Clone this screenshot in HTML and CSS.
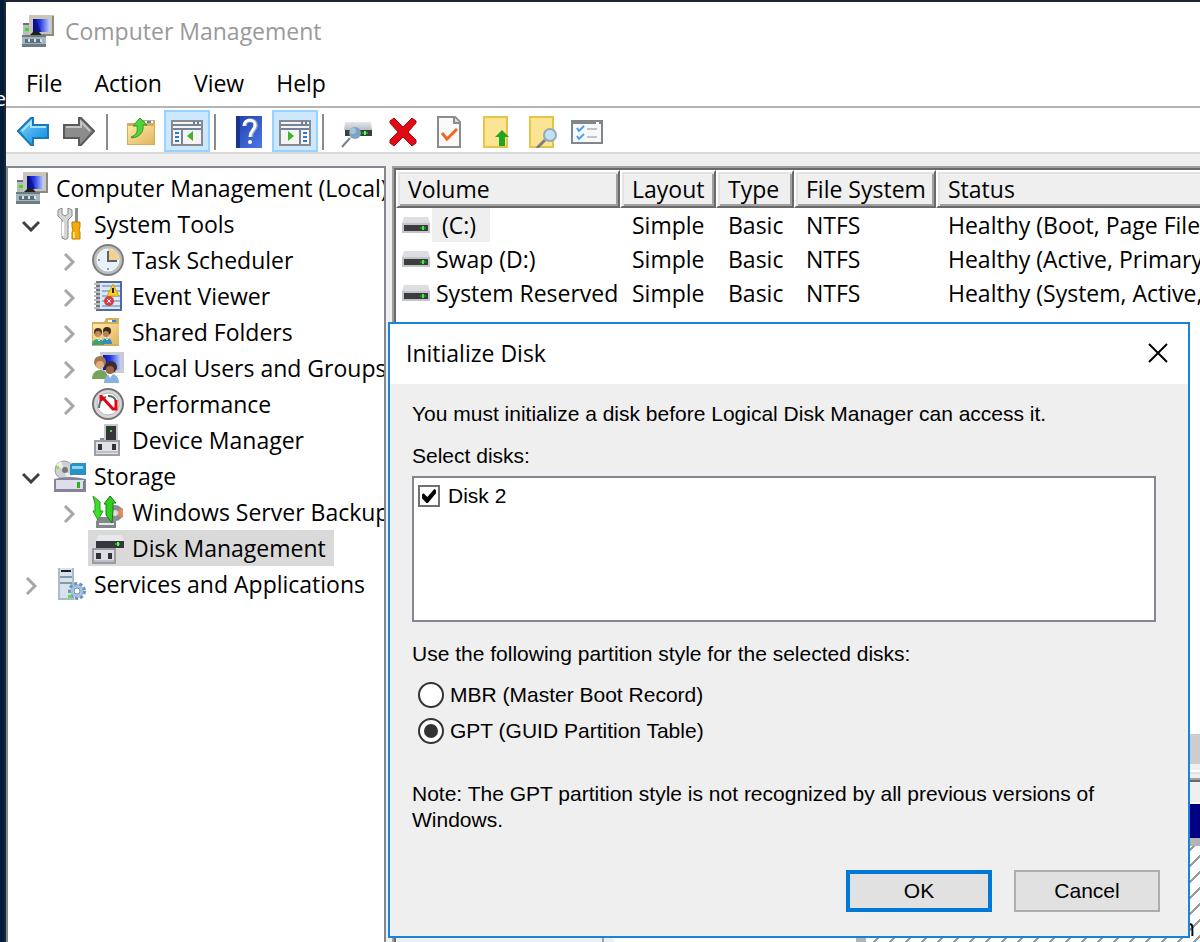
FILE: index.html
```html
<!DOCTYPE html>
<html lang="en">
<head>
    <meta charset="UTF-8">
    <meta name="viewport" content="width=device-width, initial-scale=1.0">
    <title>Computer Management</title>
    <link rel="stylesheet" href="styles.css">
</head>
<body>
    <!-- shared icons -->
    <svg class="defs" aria-hidden="true">
        <defs>
            <linearGradient id="screen" x1="0" x2="1"><stop offset="0" stop-color="#0a12b8"/><stop offset=".4" stop-color="#2236e0"/><stop offset="1" stop-color="#c4d4ff"/></linearGradient>
            <linearGradient id="folder" x1="0" y1="0" x2="1" y2="1"><stop offset="0" stop-color="#ffe9a6"/><stop offset="1" stop-color="#e0b560"/></linearGradient>
            <linearGradient id="blue" x1="0" y1="0" x2="1" y2="1"><stop offset="0" stop-color="#7fd4fb"/><stop offset="1" stop-color="#0a86e0"/></linearGradient>
            <linearGradient id="steel" x1="0" y1="0" x2="0" y2="1"><stop offset="0" stop-color="#e4e6ea"/><stop offset="1" stop-color="#b9bdc4"/></linearGradient>
            <linearGradient id="help" x1="0" y1="0" x2="1" y2="1"><stop offset="0" stop-color="#1f3fa8"/><stop offset="1" stop-color="#4a78e8"/></linearGradient>
            <symbol id="i-computer" viewBox="0 0 32 32">
                <path fill="#b9bcbd" d="M1 8h7v12H1z"/><path fill="#6a7377" d="M1 8h7v2H1z"/><path fill="#36e01c" d="M3 13h4v3H3z"/>
                <path fill="#c9c5b8" d="M7 0h25v21H7z"/><path fill="#8d8a82" d="M30 1h2v20H20v-2h10z"/>
                <path fill="url(#screen)" d="M11 4h17v13H11z"/><path fill="#060a66" d="M11 4h3l5 13h-8z" opacity=".6"/>
                <path fill="#222" d="M12 16h4l4 4H8z"/>
                <path fill="#a5b5bd" d="M0 20h24v11H0z"/><path fill="#6b7c85" d="M0 20h24v2H0zM0 29h24v3H0z"/>
                <path fill="#5d6e77" d="M3 24h16v4H3z"/><path fill="#d5e3ea" d="M6 24h2v3H6zM12 24h2v3h-2zM18 24h2v3h-2z"/>
            </symbol>
            <symbol id="i-drive" viewBox="0 0 28 16">
                <path fill="#dcdee2" d="M2 0h24l2 6H0z"/><path fill="#c1c5cb" d="M0 6h28v10H0z"/>
                <path fill="#3c3c3e" d="M2 8h24v6H2z"/><path fill="#1f8a1f" d="M18 10h6v2h-6z"/><path fill="#3fee3f" d="M20 9h2v4h-2z"/>
            </symbol>
            <symbol id="i-open" viewBox="0 0 18 12"><path d="M1 2l8 8 8-8" fill="none" stroke="#404040" stroke-width="3"/></symbol>
            <symbol id="i-closed" viewBox="0 0 12 18"><path d="M2 1l8 8-8 8" fill="none" stroke="#a6a6a6" stroke-width="3"/></symbol>
        </defs>
    </svg>

    <div class="desktop-label">e</div>
    <div class="window">
        <header class="title-bar">
            <svg class="icon"><use href="#i-computer"/></svg>
            <h1>Computer Management</h1>
        </header>
        <nav class="menu-bar">
            <button>File</button>
            <button>Action</button>
            <button>View</button>
            <button>Help</button>
        </nav>
        <div class="toolbar">
            <button aria-label="Back"><svg class="icon" viewBox="0 0 32 32"><path d="M1 15L14 2h2v7h15v13H16v7h-2z" fill="url(#blue)" stroke="#1978b8" stroke-width="2"/><path d="M5 15l9-9v5h15" fill="none" stroke="#a6e4ff" stroke-width="2"/></svg></button>
            <button aria-label="Forward"><svg class="icon" viewBox="0 0 32 32"><path d="M31 15L18 2h-2v7H1v13h15v7h2z" fill="#8c8c8c" stroke="#5a5a5a" stroke-width="2"/><path d="M3 11h15V6l9 9" fill="none" stroke="#c4c4c4" stroke-width="2"/></svg></button>
            <span class="sep"></span>
            <button aria-label="Up one level"><svg class="icon" viewBox="0 0 32 32"><path d="M2 7h14l2-3h12v25H2z" fill="#d9ad55"/><path d="M3 10h26v18H3z" fill="url(#folder)"/><path d="M20 5h8v2h-8z" fill="#fff"/><path d="M22 5h4v2h-4z" fill="#2a8cf0"/><path d="M6 21c6-2 7-6 6-11H8l7-8 7 7h-4c1 8-4 12-11 13z" fill="#4fd43a" stroke="#2c9a22"/></svg></button>
            <button class="on" aria-label="Show/Hide Console Tree"><svg class="icon" viewBox="0 0 32 32"><path d="M1 5h30v24H1z" fill="#f4f4f4" stroke="#8a8a8e" stroke-width="2"/><path d="M2 8h28v2H2zM2 12h28v2H2zM10 14h2v14h-2z" fill="#75839a"/><path d="M22 5h2v3h-2zM26 5h2v3h-2z" fill="#6a7ca0"/><path d="M4 16h4v2H4zM4 20h4v2H4zM4 24h4v2H4z" fill="#2f79c4"/><path d="M22 15v10l-6-5z" fill="#44b02c"/></svg></button>
            <span class="sep"></span>
            <button aria-label="Help"><svg class="icon" viewBox="0 0 32 32"><path d="M3 0h26v32H3z" fill="url(#help)"/><path d="M3 0h4v32H3z" fill="#1a3590"/><path d="M12 10c0-8 11-7 11-1 0 5-5 5-5 12" fill="none" stroke="#9aa4c8" stroke-width="4"/><path d="M11 10c0-8 11-7 11-1 0 5-5 5-5 12" fill="none" stroke="#fff" stroke-width="3"/><circle cx="17" cy="26" r="2" fill="#fff"/></svg></button>
            <button class="on" aria-label="Show/Hide Action Pane"><svg class="icon" viewBox="0 0 32 32"><path d="M1 5h30v24H1z" fill="#f4f4f4" stroke="#8a8a8e" stroke-width="2"/><path d="M2 8h28v2H2zM2 12h28v2H2zM20 14h2v14h-2z" fill="#75839a"/><path d="M22 5h2v3h-2zM26 5h2v3h-2z" fill="#6a7ca0"/><path d="M24 16h4v2h-4zM24 20h4v2h-4zM24 24h4v2h-4z" fill="#2f79c4"/><path d="M9 15v10l6-5z" fill="#44b02c"/></svg></button>
            <span class="sep"></span>
            <button aria-label="Rescan Disks"><svg class="icon" viewBox="0 0 32 32"><path d="M4 6h26l1 8H3z" fill="url(#steel)"/><path d="M4 14h27v6H4z" fill="#3c3f40"/><path d="M21 16h6v2h-6z" fill="#1fa01f"/><path d="M23 15h2v4h-2z" fill="#5cff5c"/><path d="M9 22l-8 9" stroke="#77828a" stroke-width="2"/><circle cx="14" cy="17" r="6" fill="#7ba3c0"/><circle cx="12" cy="15" r="3" fill="#a5c5da"/></svg></button>
            <button aria-label="Delete"><svg class="icon" viewBox="0 0 32 32"><path d="M3 5l4-3 9 9 9-9 4 3v2l-8 9 8 8v3l-4 3-9-9-9 9-4-3v-3l8-8-8-9z" fill="#df0a16" stroke="#a80c12" stroke-width="1"/></svg></button>
            <button aria-label="Properties"><svg class="icon" viewBox="0 0 32 32"><path d="M5 1h17l5 5v25H5z" fill="#f9f9fa" stroke="#8b8b8f" stroke-width="2"/><path d="M21 1v6h6" fill="#ddd" stroke="#8b8b8f" stroke-width="2"/><path d="M9 17l5 6 10-10" fill="none" stroke="#f2652a" stroke-width="3"/></svg></button>
            <button aria-label="Move Up"><svg class="icon" viewBox="0 0 32 32"><path d="M5 1h23v30H5z" fill="#fbe494" stroke="#e8c344" stroke-width="2"/><path d="M23 14l7 7h-4v9h-6v-9h-4z" fill="#22a51e"/></svg></button>
            <button aria-label="Find"><svg class="icon" viewBox="0 0 32 32"><path d="M5 1h23v30H5z" fill="#fbe494" stroke="#e8c344" stroke-width="2"/><path d="M20 24l-8 8" stroke="#7a7f82" stroke-width="3"/><circle cx="25" cy="19" r="6" fill="#c3e3f5" stroke="#94a9b5" stroke-width="2"/></svg></button>
            <button aria-label="View Options"><svg class="icon" viewBox="0 0 32 32"><path d="M1 5h30v22H1z" fill="#f6f8fa" stroke="#7f868c" stroke-width="2"/><path d="M1 4h30v4H1z" fill="#7f868c"/><path d="M25 6h3v2h-3z" fill="#fff"/><path d="M6 12l2 3 5-5M6 20l2 3 5-5" fill="none" stroke="#4aa0ea" stroke-width="2"/><path d="M16 12h10v2H16zM16 20h10v2H16z" fill="#c4c4c4"/></svg></button>
        </div>

        <div class="panes">
            <nav class="tree">
                <div class="row"><a class="node" href="#"><svg class="icon"><use href="#i-computer"/></svg>Computer Management (Local)</a></div>
                <div class="row">
                    <span class="twisty"><svg class="open"><use href="#i-open"/></svg></span>
                    <a class="node" href="#"><svg class="icon" viewBox="0 0 32 32"><path d="M4 2v6l4 4v18q4 3 6 0V12l4-4V2l-4-2v6l-3 2-3-2V0z" fill="#d4d6d8" stroke="#848688"/><path d="M9 14v14" stroke="#fff" stroke-width="2"/><path d="M21 0h3v14h-3z" fill="#8d9092"/><path d="M18 14h8v5l-1 3 1 2v7h-8v-7l1-2-1-3z" fill="#f2ab0c" stroke="#c07c00"/><path d="M20 24v6" stroke="#ffe070" stroke-width="2"/></svg>System Tools</a>
                </div>
                <div class="row sub">
                    <span class="twisty"><svg class="closed"><use href="#i-closed"/></svg></span>
                    <a class="node" href="#"><svg class="icon" viewBox="0 0 32 32"><circle cx="16" cy="16" r="15" fill="#bcbec0" stroke="#7d7f80" stroke-width="2"/><circle cx="16" cy="16" r="11" fill="#e8f1f9" stroke="#fff"/><path d="M16 5a11 11 0 0 1 11 11H16z" fill="#f4cf8c"/><path d="M16 7v10h9" fill="none" stroke="#566370" stroke-width="2"/><path d="M15 25h2M6 16h2" stroke="#8898a8" stroke-width="2"/></svg>Task Scheduler</a>
                </div>
                <div class="row sub">
                    <span class="twisty"><svg class="closed"><use href="#i-closed"/></svg></span>
                    <a class="node" href="#"><svg class="icon" viewBox="0 0 32 32"><path d="M5 2h24v28H5z" fill="#dce8f6" stroke="#4f68a6" stroke-width="2"/><path d="M10 6h18M10 11h18M10 16h18M10 21h18M10 26h18" stroke="#91b4dc" stroke-width="2"/><path d="M4 1h4v29H4z" fill="#6f7784"/><path d="M2 4h6M2 8h6M2 12h6M2 16h6M2 20h6M2 24h6M2 28h6" stroke="#bbb" stroke-width="2"/><path d="M21 4l6 12H15z" fill="#f6cf2c" stroke="#d4a510"/><path d="M20 8h2v5h-2z" fill="#222"/><circle cx="17" cy="21" r="5" fill="#d83a42"/><path d="M15 19l4 4m0-4l-4 4" stroke="#fff"/></svg>Event Viewer</a>
                </div>
                <div class="row sub">
                    <span class="twisty"><svg class="closed"><use href="#i-closed"/></svg></span>
                    <a class="node" href="#"><svg class="icon" viewBox="0 0 32 32"><path d="M0 6h12l2-4h13v28H0z" fill="#d6ac58"/><path d="M1 8h26v20H1z" fill="url(#folder)"/><path d="M16 4h8v2h-8z" fill="#fff"/><path d="M20 4h4v2h-4z" fill="#2d8ced"/><circle cx="6" cy="16" r="4" fill="#4a3524"/><circle cx="6" cy="18" r="3" fill="#c48a5c"/><path d="M0 29c0-8 12-8 12 0z" fill="#35a679"/><circle cx="15" cy="15" r="4" fill="#3a2a1e"/><circle cx="14" cy="18" r="3" fill="#b98156"/><path d="M10 28c0-8 10-8 10 0z" fill="#2d8fc9"/><path d="M5 22l2 3 2-3M13 21l2 3 2-3" stroke="#fff" fill="none"/></svg>Shared Folders</a>
                </div>
                <div class="row sub">
                    <span class="twisty"><svg class="closed"><use href="#i-closed"/></svg></span>
                    <a class="node" href="#"><svg class="icon" viewBox="0 0 32 32"><path d="M8 0h24v21H8z" fill="#c9cbd0"/><path d="M11 3h18v15H11z" fill="url(#screen)"/><circle cx="8" cy="10" r="6" fill="#a47a4a"/><circle cx="8" cy="13" r="4" fill="#e0b084"/><path d="M0 27c0-12 16-12 16 0z" fill="#75a45a"/><circle cx="19" cy="15" r="6" fill="#3c2d28"/><circle cx="18" cy="18" r="4" fill="#9a6344"/><path d="M12 31c0-12 15-12 15 0z" fill="#86b3e0"/><path d="M16 22l2 4 3-4z" fill="#fff"/></svg>Local Users and Groups</a>
                </div>
                <div class="row sub">
                    <span class="twisty"><svg class="closed"><use href="#i-closed"/></svg></span>
                    <a class="node" href="#"><svg class="icon" viewBox="0 0 32 32"><circle cx="16" cy="16" r="15" fill="#d8d8d8" stroke="#747474" stroke-width="2"/><circle cx="16" cy="16" r="11" fill="#fff" stroke="#b5b5b5"/><path d="M7 20c0-6 3-10 7-11M16 8c4 0 7 2 8 5" fill="none" stroke="#536f60" stroke-width="2"/><path d="M9 8l12 13h3v-9M9 7v6" fill="none" stroke="#de0814" stroke-width="3"/></svg>Performance</a>
                </div>
                <div class="row sub">
                    <span class="twisty"></span>
                    <a class="node" href="#"><svg class="icon" viewBox="0 0 32 32"><path d="M12 0h14v18H12z" fill="#c8cbce"/><path d="M14 2h10v14H14z" fill="#343638"/><path d="M18 6h2v2h-2z" fill="#41e441"/><path d="M8 14h4v3H8z" fill="#8b8e90"/><path d="M3 17h24v14H3z" fill="#dfe1e7" stroke="#9b9ea6" stroke-width="2"/><path d="M6 20h4v6H6zM20 20h4v6h-4z" fill="#333"/><path d="M4 27h22v2H4z" fill="#bcbfc8"/></svg>Device Manager</a>
                </div>
                <div class="row">
                    <span class="twisty"><svg class="open"><use href="#i-open"/></svg></span>
                    <a class="node" href="#"><svg class="icon" viewBox="0 0 32 32"><circle cx="10" cy="10" r="9" fill="#cfd1d2" stroke="#999"/><path d="M10 10L2 5l5-4zM10 10l8 6-5 3z" fill="#eef0f0"/><circle cx="11" cy="10" r="3" fill="#777"/><path d="M2 6h3v3H2z" fill="#98dc4a"/><path d="M16 5l2-2h14v12H16z" fill="#2892c4"/><path d="M18 6h11v3H18z" fill="#8ad6f2"/><path d="M0 19q16-4 32 0v13H0z" fill="#85839c"/><path d="M2 20h28v9H2z" fill="#dcdcea"/><path d="M23 22h3v6h-3z" fill="#2eb021"/><path d="M29 21h1v8h-1z" fill="#777"/></svg>Storage</a>
                </div>
                <div class="row sub">
                    <span class="twisty"><svg class="closed"><use href="#i-closed"/></svg></span>
                    <a class="node" href="#"><svg class="icon" viewBox="0 0 32 32"><path d="M4 25l4-4h12l4 4v7H4z" fill="#84878a"/><path d="M7 27h15v2H7z" fill="#e4e6e8"/><circle cx="23" cy="17" r="8" fill="#8b8d92"/><path d="M23 17l8-5v10z" fill="#e68a5c"/><circle cx="23" cy="17" r="3" fill="#ddd"/><path d="M1 0l7 6v9h3l-5 9-5-9h2V8z" fill="#3fe02c" stroke="#239a18"/><path d="M12 8l6-8 6 7h-3v7l-1 13-6-8V8z" fill="#2fcf22" stroke="#157c12"/></svg>Windows Server Backup</a>
                </div>
                <div class="row sub">
                    <span class="twisty"></span>
                    <a class="node selected" href="#"><svg class="icon" viewBox="0 0 32 32"><path d="M6 3h24l2 6H4z" fill="#e6e8ec"/><path d="M4 9h28v7H4z" fill="#353738"/><path d="M23 11h5v2h-5z" fill="#1fa61f"/><path d="M25 10h2v4h-2z" fill="#52ff52"/><path d="M1 17h22v14H1z" fill="#dcdee4" stroke="#999ca2" stroke-width="2"/><path d="M4 21h5v6H4zM16 21h4v6h-4z" fill="#333"/><path d="M2 28h20v2H2z" fill="#bcbfc6"/></svg>Disk Management</a>
                </div>
                <div class="row">
                    <span class="twisty"><svg class="closed"><use href="#i-closed"/></svg></span>
                    <a class="node" href="#"><svg class="icon" viewBox="0 0 32 32"><path d="M4 0h16v32H4z" fill="#a9bccb"/><path d="M6 0h12v30H6z" fill="#d7e2ea"/><path d="M7 2h10v2H7z" fill="#222"/><path d="M6 8h12v2H6zM6 14h12v2H6z" fill="#8299aa"/><circle cx="23" cy="23" r="7" fill="#a9c3de" stroke="#6d94bd" stroke-width="4" stroke-dasharray="3 2"/><circle cx="23" cy="23" r="6" fill="#a9c3de"/><circle cx="23" cy="23" r="3" fill="#fff" stroke="#6d94bd"/><path d="M14 27h4v3h-4z" fill="#62e04a"/></svg>Services and Applications</a>
                </div>
            </nav>

            <main class="details">
                <div class="volumes">
                    <table>
                        <colgroup><col class="c-volume"><col class="c-layout"><col class="c-type"><col class="c-fs"><col></colgroup>
                        <thead>
                            <tr><th>Volume</th><th>Layout</th><th>Type</th><th>File System</th><th>Status</th></tr>
                        </thead>
                        <tbody>
                            <tr><td class="name"><svg class="drive"><use href="#i-drive"/></svg><span class="focus">(C:)</span></td><td>Simple</td><td>Basic</td><td>NTFS</td><td>Healthy (Boot, Page File,</td></tr>
                            <tr><td class="name"><svg class="drive"><use href="#i-drive"/></svg><span>Swap (D:)</span></td><td>Simple</td><td>Basic</td><td>NTFS</td><td>Healthy (Active, Primary</td></tr>
                            <tr><td class="name"><svg class="drive"><use href="#i-drive"/></svg><span>System Reserved</span></td><td>Simple</td><td>Basic</td><td>NTFS</td><td>Healthy (System, Active,</td></tr>
                        </tbody>
                    </table>
                </div>
                <div class="scrollbar"></div>
                <div class="splitter"></div>
                <div class="graph">
                    <div class="disk"></div>
                    <div class="partition plain"></div>
                    <div class="partition hatched"><span>n</span></div>
                </div>
            </main>
        </div>
    </div>

    <form class="dialog" role="dialog" aria-labelledby="dialog-title">
        <div class="dialog-title">
            <h2 id="dialog-title">Initialize Disk</h2>
            <button type="button" class="close" aria-label="Close"><svg viewBox="0 0 20 20"><path d="M1 1l18 18M19 1L1 19" stroke="#000" stroke-width="2"/></svg></button>
        </div>
        <div class="dialog-body">
            <p>You must initialize a disk before Logical Disk Manager can access it.</p>
            <p class="list-label">Select disks:</p>
            <div class="disk-list">
                <label><input type="checkbox" checked>Disk 2</label>
            </div>
            <p class="style-label">Use the following partition style for the selected disks:</p>
            <div class="styles">
                <label><input type="radio" name="style">MBR (Master Boot Record)</label>
                <label><input type="radio" name="style" checked>GPT (GUID Partition Table)</label>
            </div>
            <p class="note">Note: The GPT partition style is not recognized by all previous versions of Windows.</p>
            <div class="actions">
                <button type="button" class="btn default">OK</button>
                <button type="button" class="btn">Cancel</button>
            </div>
        </div>
    </form>
</body>
</html>
```
FILE: styles.css
```css
*{
    margin: 0;
    padding: 0;
    box-sizing: border-box;
}
body{
    position: relative;
    height: 100vh;
    padding: 2px 0 0 6px;
    overflow: hidden;
    background: linear-gradient(90deg, #041c3c 4px, #1c2634 4px);
    color: #000;
    font-family: "Open Sans", "Noto Sans", sans-serif;
    font-size: 23px;
    line-height: 34px;
}
button{
    font: inherit;
    color: inherit;
    border: none;
    background: none;
}
.defs{
    position: absolute;
    width: 0;
    height: 0;
}
.icon{
    width: 32px;
    height: 32px;
    flex: none;
    display: block;
}
/* caption of a desktop icon, mostly hidden by the window */
.desktop-label{
    position: absolute;
    left: 0;
    top: 82px;
    width: 6px;
    overflow: hidden;
    direction: rtl;
    color: #fff;
    font-size: 20px;
}

/* window */
.window{
    display: flex;
    flex-direction: column;
    height: 100%;
    background: #fff;
}
.title-bar{
    display: flex;
    align-items: center;
    gap: 11px;
    height: 60px;
    padding: 0 0 2px 16px;
    color: #999;
}
.title-bar h1{
    font-size: inherit;
    font-weight: 400;
}
.menu-bar{
    display: flex;
    height: 44px;
    padding: 0 0 2px 4px;
}
.menu-bar button{
    padding: 0 16px;
}
.toolbar{
    display: flex;
    flex: none;
    height: 48px;
    padding: 2px 4px 0;
    border-top: 2px solid #b4b4b4;
    border-bottom: 2px solid #d9d9d9;
}
.toolbar button{
    display: flex;
    align-items: center;
    justify-content: center;
    width: 46px;
    height: 42px;
    padding: 2px 1px 0 0;
}
.toolbar .on{
    background: #cce8ff;
    border: 2px solid #99d1ff;
}
.sep{
    width: 16px;
    padding: 4px 0 2px 4px;
}
.sep::before{
    content: '';
    display: block;
    width: 2px;
    height: 100%;
    background: #8c8c8c;
}
.panes{
    display: flex;
    flex: 1;
    gap: 6px;
    min-height: 0;
    padding-top: 12px;
    background: #efefef;
}

/* console tree */
.tree{
    width: 380px;
    flex: none;
    padding: 2px 0 0 4px;
    overflow: hidden;
    background: #fff;
    border: 2px solid #828790;
    border-bottom: none;
}
.row{
    display: flex;
    height: 36px;
}
.row.sub{
    padding-left: 38px;
}
.twisty{
    display: flex;
    flex: none;
    align-items: center;
    justify-content: center;
    width: 38px;
    padding-top: 4px;
}
.open{
    width: 18px;
    height: 12px;
}
.closed{
    width: 12px;
    height: 18px;
}
.node{
    display: flex;
    align-items: center;
    gap: 8px;
    padding: 0 8px 0 4px;
    color: #000;
    text-decoration: none;
    white-space: nowrap;
}
.node.selected{
    background: #d9d9d9;
}

/* volume list */
.details{
    display: flex;
    flex-direction: column;
    flex: 1;
    min-width: 0;
    border-left: 2px solid #a0a0a0;
    border-top: 2px solid #a0a0a0;
}
.volumes{
    flex: 1;
    min-height: 0;
    overflow: hidden;
    background: #fff;
    border-left: 2px solid #696969;
    border-top: 2px solid #696969;
}
table{
    width: 100%;
    table-layout: fixed;
    border-collapse: separate;
    border-spacing: 0;
}
.c-volume{ width: 224px; }
.c-layout{ width: 96px; }
.c-type{ width: 78px; }
.c-fs{ width: 142px; }
th{
    height: 38px;
    padding-left: 10px;
    text-align: left;
    font-weight: 400;
    line-height: 32px;
    white-space: nowrap;
    background: #efefef;
    border: 2px solid #696969;
    border-left-color: #fff;
    border-top-color: #fff;
    box-shadow: inset 2px 2px #e3e3e3, inset -2px -2px #a0a0a0;
}
th:last-child{
    border-right: none;
    box-shadow: inset 2px 2px #e3e3e3, inset 0 -2px #a0a0a0;
}
td{
    height: 34px;
    padding-left: 12px;
    white-space: nowrap;
    overflow: hidden;
}
.name{
    display: flex;
    align-items: center;
    padding-left: 6px;
}
.drive{
    flex: none;
    width: 28px;
    height: 16px;
    margin-right: 2px;
}
.name span{
    padding-left: 4px;
}
.name .focus{
    padding: 0 14px 0 10px;
    background: #efefef;
}

/* graphical view */
.scrollbar{
    height: 30px;
    background: #cdcdcd;
}
.splitter{
    height: 16px;
    background: #efefef;
    border-bottom: 2px solid #a0a0a0;
    box-shadow: inset 0 -4px #efefef, inset 0 -6px #e3e3e3, inset 0 -8px #fff;
}
.graph{
    display: flex;
    height: 162px;
    border-left: 2px solid #696969;
    border-top: 2px solid #696969;
    background: #efefef;
}
.disk{
    width: 206px;
    margin: 20px 2px 0;
    border-right: 2px solid #a0a0a0;
}
.partition{
    margin-top: 20px;
    border-top: 2px solid #fff;
    background: #fff;
}
.partition::before{
    content: '';
    display: block;
    height: 34px;
    background: #000080;
    border-bottom: 8px solid #b4b4b4;
}
.plain{
    width: 260px;
    border-left: 8px solid #efefef;
    border-right: 10px solid #b4b4b4;
}
.hatched{
    flex: 1;
    background: #fff linear-gradient(to bottom right, transparent 46%, #999 46%, #999 54%, transparent 54%) 0 2px / 16px 16px;
    text-align: right;
}
.hatched span{
    display: block;
    padding: 64px 5px 0 0;
}

/* dialog */
.dialog{
    position: absolute;
    left: 388px;
    top: 322px;
    width: 802px;
    background: #efefef;
    border: 2px solid #1883d7;
    font-family: "Liberation Sans", Arial, sans-serif;
    font-size: 21px;
    line-height: 26px;
}
.dialog-title{
    display: flex;
    align-items: center;
    justify-content: space-between;
    height: 60px;
    padding: 0 20px 2px 16px;
    background: #fff;
    font-family: "Open Sans", "Noto Sans", sans-serif;
}
.dialog-title h2{
    font-size: 23px;
    font-weight: 400;
}
.close svg{
    display: block;
    width: 20px;
    height: 20px;
}
.dialog-body{
    padding: 17px 28px 24px 22px;
}
.list-label{
    margin-top: 16px;
}
.disk-list{
    height: 146px;
    margin: 7px 4px 19px 0;
    padding: 5px 4px;
    background: #fff;
    border: 2px solid #828790;
}
.dialog label{
    display: flex;
    align-items: center;
}
.dialog input{
    appearance: none;
    flex: none;
    display: grid;
    place-items: center;
    background: #fff;
}
.dialog input[type=checkbox]{
    width: 22px;
    height: 22px;
    margin-right: 8px;
    border: 2px solid #707070;
}
.dialog input[type=checkbox]:checked::before{
    content: '';
    width: 14px;
    height: 14px;
    background: #000;
    clip-path: polygon(0 40%, 12% 30%, 38% 58%, 88% 0, 100% 8%, 100% 30%, 42% 100%, 32% 100%, 0 66%);
}
.styles{
    margin-top: 10px;
    padding-left: 6px;
}
.styles label{
    height: 36px;
}
.dialog input[type=radio]{
    width: 26px;
    height: 26px;
    margin-right: 6px;
    border: 2px solid #333;
    border-radius: 50%;
}
.dialog input[type=radio]:checked::before{
    content: '';
    width: 14px;
    height: 14px;
    border-radius: 50%;
    background: #333;
}
.note{
    margin-top: 32px;
}
.actions{
    display: flex;
    justify-content: flex-end;
    gap: 22px;
    margin-top: 37px;
}
.btn{
    width: 146px;
    height: 42px;
    background: #e1e1e1;
    border: 2px solid #adadad;
}
.btn.default{
    border: 4px solid #0078d7;
}
```
